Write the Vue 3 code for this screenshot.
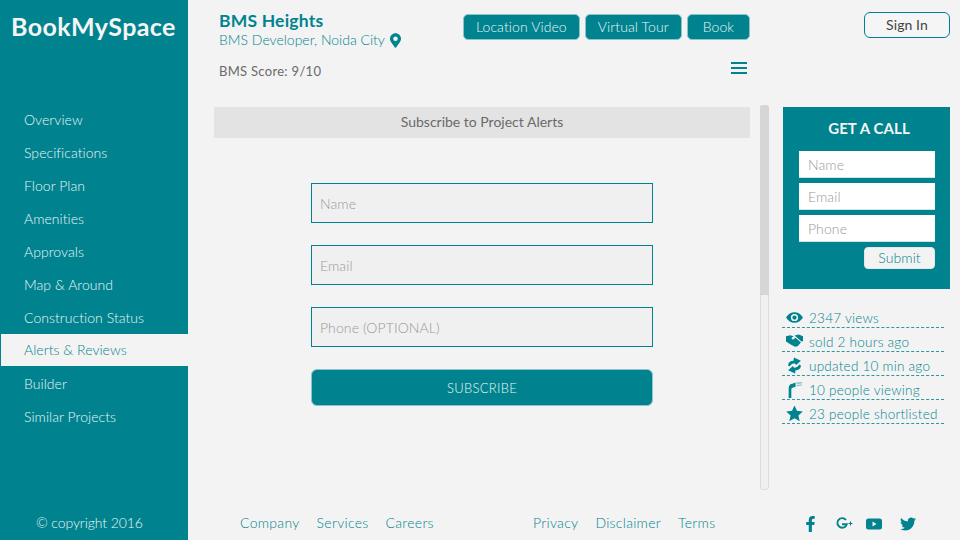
<script setup>
const navItems = [
  'Overview',
  'Specifications',
  'Floor Plan',
  'Amenities',
  'Approvals',
  'Map & Around',
  'Construction Status',
  'Alerts & Reviews',
  'Builder',
  'Similar Projects'
]

const activeItem = 'Alerts & Reviews'

const stats = [
  { icon: 'eye', label: '2347 views' },
  { icon: 'hands', label: 'sold 2 hours ago' },
  { icon: 'sync', label: 'updated 10 min ago' },
  { icon: 'flag', label: '10 people viewing' },
  { icon: 'star', label: '23 people shortlisted' }
]

const footerLeft = ['Company', 'Services', 'Careers']
const footerRight = ['Privacy', 'Disclaimer', 'Terms']
</script>

<template>
  <div class="page">
    <aside class="sidebar">
      <div class="logo">BookMySpace</div>
      <nav class="nav">
        <a
          v-for="item in navItems"
          :key="item"
          class="nav-item"
          :class="{ active: item === activeItem }"
        >{{ item }}</a>
      </nav>
      <div class="copyright">© copyright 2016</div>
    </aside>

    <div class="content">
      <header class="header">
        <div class="project">
          <h1 class="project-name">BMS Heights</h1>
          <div class="project-sub">
            BMS Developer, Noida City
            <svg class="pin" viewBox="0 0 384 512" width="11" height="15">
              <path fill="currentColor" d="M172 502C27 291 0 264 0 192 0 86 86 0 192 0s192 86 192 192c0 72-27 99-172 310-10 14-30 14-40 0zm20-230a80 80 0 1 0 0-160 80 80 0 0 0 0 160z" />
            </svg>
          </div>
          <div class="score">BMS Score: 9/10</div>
        </div>
        <div class="actions">
          <div class="action-row">
            <button class="action">Location Video</button>
            <button class="action">Virtual Tour</button>
            <button class="action">Book</button>
          </div>
          <div class="menu-icon"><span></span><span></span><span></span></div>
        </div>
        <button class="signin">Sign In</button>
      </header>

      <div class="middle">
        <main class="alerts">
          <div class="alerts-title">Subscribe to Project Alerts</div>
          <form class="alerts-form" @submit.prevent>
            <input class="field" placeholder="Name" />
            <input class="field" placeholder="Email" />
            <input class="field" placeholder="Phone (OPTIONAL)" />
            <button class="subscribe">SUBSCRIBE</button>
          </form>
        </main>

        <div class="scrollbar"><div class="thumb"></div></div>

        <div class="side">
          <form class="call-card" @submit.prevent>
            <h2 class="call-title">GET A CALL</h2>
            <input class="call-input" placeholder="Name" />
            <input class="call-input" placeholder="Email" />
            <input class="call-input" placeholder="Phone" />
            <button class="call-submit">Submit</button>
          </form>

          <ul class="stats">
            <li v-for="stat in stats" :key="stat.label" class="stat">
              <svg class="stat-icon" viewBox="0 0 16 16" width="17" height="17">
                <g v-if="stat.icon === 'eye'">
                  <path fill="currentColor" fill-rule="evenodd" d="M0 8c2-3.300 4.800-5 8-5s6 1.700 8 5c-2 3.300-4.800 5-8 5S2 11.300 0 8zm8 3.400a3.400 3.400 0 1 0 0-6.800 3.400 3.400 0 0 0 0 6.800z" />
                  <circle fill="currentColor" cx="8" cy="8" r="2" />
                </g>
                <g v-else-if="stat.icon === 'hands'">
                  <path fill="currentColor" d="M0 3 4 2 7 3 5 5 6.500 6.300 9 4.500 14 9 11 12.500 8.500 13 4 10.500 0 8z" />
                  <path fill="currentColor" d="M8 2.300 12 1.500 16 3 16 7.500 14.800 8.300 9.200 3.300z" />
                </g>
                <g v-else-if="stat.icon === 'sync'">
                  <path fill="currentColor" d="M2 8C2 5 4 3.500 7 3.500L7.500 0.500 14 3.500 9.500 7.500 8.500 6C6.500 6 4.500 6.500 3.500 9z" />
                  <path fill="currentColor" d="M14 8C14 11 12 12.500 9 12.500L8.500 15.500 2 12.500 6.500 8.500 7.500 10C9.500 10 11.500 9.500 12.500 7z" />
                </g>
                <g v-else-if="stat.icon === 'flag'">
                  <path fill="currentColor" d="M2.500 16V7C2.500 4 4 2.500 6 2.500L9 1.500V5.500L6.800 6C5.500 6.300 5 7 5 8.500V16z" />
                  <path fill="currentColor" opacity="0.45" d="M10 1.500 15 1V2L10 3zM10 3.800 15 3.200V4.200L10 5z" />
                </g>
                <path v-else fill="currentColor" d="M8 0.500 10.300 5.500 15.800 6.100 11.700 9.800 12.900 15.300 8 12.500 3.100 15.300 4.300 9.800 0.200 6.100 5.700 5.500z" />
              </svg>
              <span>{{ stat.label }}</span>
            </li>
          </ul>
        </div>
      </div>

      <footer class="footer">
        <div class="foot-links foot-left">
          <a v-for="link in footerLeft" :key="link">{{ link }}</a>
        </div>
        <div class="foot-links foot-right">
          <a v-for="link in footerRight" :key="link">{{ link }}</a>
        </div>
        <div class="social">
          <svg viewBox="0 0 320 512" width="11" height="16">
            <path fill="currentColor" d="M279.140 288l14.220-92.660h-88.910v-60.130c0-25.350 12.420-50.060 52.240-50.060h40.420V6.260S260.430 0 225.360 0c-73.220 0-121.080 44.380-121.080 124.720v70.620H22.890V288h81.390v224h100.170V288z" />
          </svg>
          <svg class="gplus" viewBox="0 0 17 13" width="17" height="13">
            <path fill="none" stroke="currentColor" stroke-width="1.900" d="M10 3A4.800 4.800 0 1 0 10.800 7.200H6" />
            <path fill="none" stroke="currentColor" stroke-width="1.100" d="M12.500 6.500h4M14.500 4.500v4" />
          </svg>
          <svg viewBox="0 0 16 12" width="16" height="12">
            <path fill="currentColor" fill-rule="evenodd" d="M2.500 0.500h11A2.500 2.500 0 0 1 16 3v6a2.500 2.500 0 0 1-2.500 2.500h-11A2.500 2.500 0 0 1 0 9V3A2.500 2.500 0 0 1 2.500 0.500zM6.500 3.500v5L10.500 6z" />
          </svg>
          <svg viewBox="0 0 512 512" width="16" height="16">
            <path fill="currentColor" d="M459.370 151.716c.325 4.548.325 9.097.325 13.645 0 138.720-105.583 298.558-298.558 298.558-59.452 0-114.680-17.219-161.137-47.106 8.447.974 16.568 1.299 25.340 1.299 49.055 0 94.213-16.568 130.274-44.832-46.132-.975-84.792-31.188-98.112-72.772 6.498.974 12.995 1.624 19.818 1.624 9.421 0 18.843-1.300 27.614-3.573-48.081-9.747-84.143-51.980-84.143-102.985v-1.299c13.969 7.797 30.214 12.670 47.431 13.319-28.264-18.843-46.781-51.005-46.781-87.391 0-19.492 5.197-37.360 14.294-52.954 51.655 63.675 129.300 105.258 216.365 109.807-1.624-7.797-2.599-15.918-2.599-24.040 0-57.828 46.782-104.934 104.934-104.934 30.213 0 57.502 12.670 76.670 33.137 23.715-4.548 46.456-13.320 66.599-25.340-7.798 24.366-24.366 44.833-46.132 57.827 21.117-2.273 41.584-8.122 60.426-16.243-14.292 20.791-32.161 39.308-52.628 54.253z" />
          </svg>
        </div>
      </footer>
    </div>
  </div>
</template>

<style>
body {
  margin: 0;
  background: #f3f3f3;
}
</style>

<style scoped>
.page {
  display: flex;
  width: 960px;
  height: 540px;
  overflow: hidden;
  background: #f3f3f3;
  font-family: Lato, "Open Sans", sans-serif;
  font-size: 14px;
  font-weight: 300;
  letter-spacing: 0.1px;
  color: #555;
}

.sidebar {
  display: flex;
  flex-direction: column;
  flex: none;
  width: 187px;
  height: 540px;
  padding-left: 1px;
  background: #00838f;
  color: #eaf5f6;
}

.logo {
  height: 103px;
  padding: 10px 0 0 10px;
  box-sizing: border-box;
  font-size: 25px;
  font-weight: 700;
  line-height: 32px;
  letter-spacing: 0.4px;
  color: #f5f5f5;
}

.nav {
  display: flex;
  flex-direction: column;
  letter-spacing: 0.05px;
}

.nav-item {
  height: 33px;
  padding-left: 23px;
  line-height: 33px;
}

.nav-item.active {
  height: 32px;
  margin-bottom: 1px;
  background: #f3f3f3;
  color: #00838f;
  line-height: 32px;
}

.copyright {
  margin-top: auto;
  padding: 0 0 9px 35px;
  line-height: 17px;
  letter-spacing: -0.1px;
}

.content {
  display: flex;
  flex-direction: column;
  flex: 1;
  min-width: 0;
}

.header {
  display: flex;
  height: 105px;
  box-sizing: border-box;
  padding: 12px 10px 0 31px;
}

.project {
  width: 244px;
  flex: none;
}

.project-name {
  margin: 0;
  font-size: 17.500px;
  font-weight: 700;
  line-height: 18px;
  letter-spacing: 0.2px;
  color: #00838f;
}

.project-sub {
  display: flex;
  align-items: center;
  gap: 5px;
  line-height: 20px;
  letter-spacing: 0;
  color: #00838f;
}

.pin {
  color: #00838f;
}

.score {
  margin-top: 12px;
  font-size: 13px;
  font-weight: 400;
  line-height: 18px;
  letter-spacing: 0.3px;
  color: #6a6a6a;
}

.actions {
  display: flex;
  flex-direction: column;
  width: 287px;
  padding-top: 2px;
}

.action-row {
  display: flex;
  gap: 5px;
}

.action {
  height: 26px;
  padding: 0 12px 2px;
  border: 1px solid #8bc5cb;
  border-radius: 5px;
  background: #00838f;
  color: #eaf5f6;
  font: inherit;
  letter-spacing: inherit;
  white-space: nowrap;
}

.action:last-child {
  flex: 1;
}

.menu-icon {
  display: flex;
  flex-direction: column;
  gap: 3px;
  align-self: flex-end;
  width: 16px;
  margin: 22px 3px 0 0;
}

.menu-icon span {
  height: 2px;
  background: #00838f;
}

.signin {
  width: 86px;
  height: 26px;
  margin-left: auto;
  padding: 0 0 2px;
  border: 1px solid #00838f;
  border-radius: 6px;
  background: #f5f5f5;
  color: #444;
  font: inherit;
  font-weight: 400;
  letter-spacing: inherit;
}

.middle {
  display: flex;
  flex: 1;
  min-height: 0;
}

.alerts {
  width: 536px;
  margin-left: 26px;
  padding-top: 2px;
}

.alerts-title {
  height: 31px;
  background: #e3e3e3;
  text-align: center;
  line-height: 30px;
  font-weight: 400;
  letter-spacing: 0;
  color: #6a6a6a;
}

.alerts-form {
  display: flex;
  flex-direction: column;
  gap: 22px;
  width: 342px;
  margin: 45px auto 0;
}

.field {
  height: 40px;
  box-sizing: border-box;
  padding: 0 8px;
  border: 1px solid #00838f;
  background: #f0f0f0;
  font: inherit;
  letter-spacing: inherit;
  outline: none;
}

.field::placeholder,
.call-input::placeholder {
  color: #999;
  opacity: 1;
}

.subscribe {
  width: 342px;
  height: 37px;
  border: 1px solid #8bc5cb;
  border-radius: 6px;
  background: #00838f;
  color: #eaf5f6;
  font: inherit;
  font-size: 13px;
  letter-spacing: 0.3px;
}

.scrollbar {
  width: 9px;
  height: 385px;
  margin-left: 10px;
  box-sizing: border-box;
  border: 1px solid #dcdcdc;
  border-radius: 3px;
  background: #f0f0f0;
}

.thumb {
  height: 190px;
  margin: -1px;
  border-radius: 3px 3px 0 0;
  background: #d6d6d6;
}

.side {
  width: 167px;
  margin-left: 14px;
  padding-top: 2px;
}

.call-card {
  display: flex;
  flex-direction: column;
  gap: 5px;
  height: 182px;
  box-sizing: border-box;
  padding: 11px 15px 0 16px;
  background: #00838f;
}

.call-title {
  margin: 0 0 8px;
  padding-left: 4px;
  text-align: center;
  font-size: 15px;
  font-weight: 700;
  line-height: 20px;
  letter-spacing: 0.1px;
  color: #f5f5f5;
}

.call-input {
  height: 27px;
  box-sizing: border-box;
  padding: 0 9px;
  border: none;
  border-bottom: 1px solid #cfe6e8;
  background: #fff;
  font: inherit;
  letter-spacing: inherit;
  outline: none;
}

.call-submit {
  align-self: flex-end;
  width: 71px;
  height: 22px;
  padding: 0 0 2px;
  border: 1px solid #e0e8e8;
  border-radius: 4px;
  background: #f3f3f3;
  color: #00838f;
  font: inherit;
  letter-spacing: inherit;
}

.stats {
  width: 162px;
  margin: 15px 0 0 -1px;
  padding: 0;
  list-style: none;
}

.stat {
  display: flex;
  align-items: center;
  gap: 6px;
  height: 24px;
  box-sizing: border-box;
  padding-top: 4px;
  border-bottom: 1px dashed #2a98a3;
  color: #00838f;
  font-size: 13.500px;
  letter-spacing: 0.25px;
  white-space: nowrap;
}

.stat-icon {
  flex: none;
  margin-left: 4px;
  color: #00838f;
}

.footer {
  display: flex;
  align-items: center;
  flex: none;
  height: 35px;
  padding-bottom: 1px;
  box-sizing: border-box;
  letter-spacing: 0.3px;
  color: #00838f;
}

.foot-links {
  display: flex;
  gap: 17px;
}

.foot-left {
  width: 293px;
  margin-left: 52px;
}

.foot-right {
  width: 272px;
}

.social {
  display: flex;
  align-items: center;
  gap: 18px;
  margin-top: 3px;
  color: #00838f;
}

.gplus {
  margin: 0 -5px 0 2px;
}
</style>
